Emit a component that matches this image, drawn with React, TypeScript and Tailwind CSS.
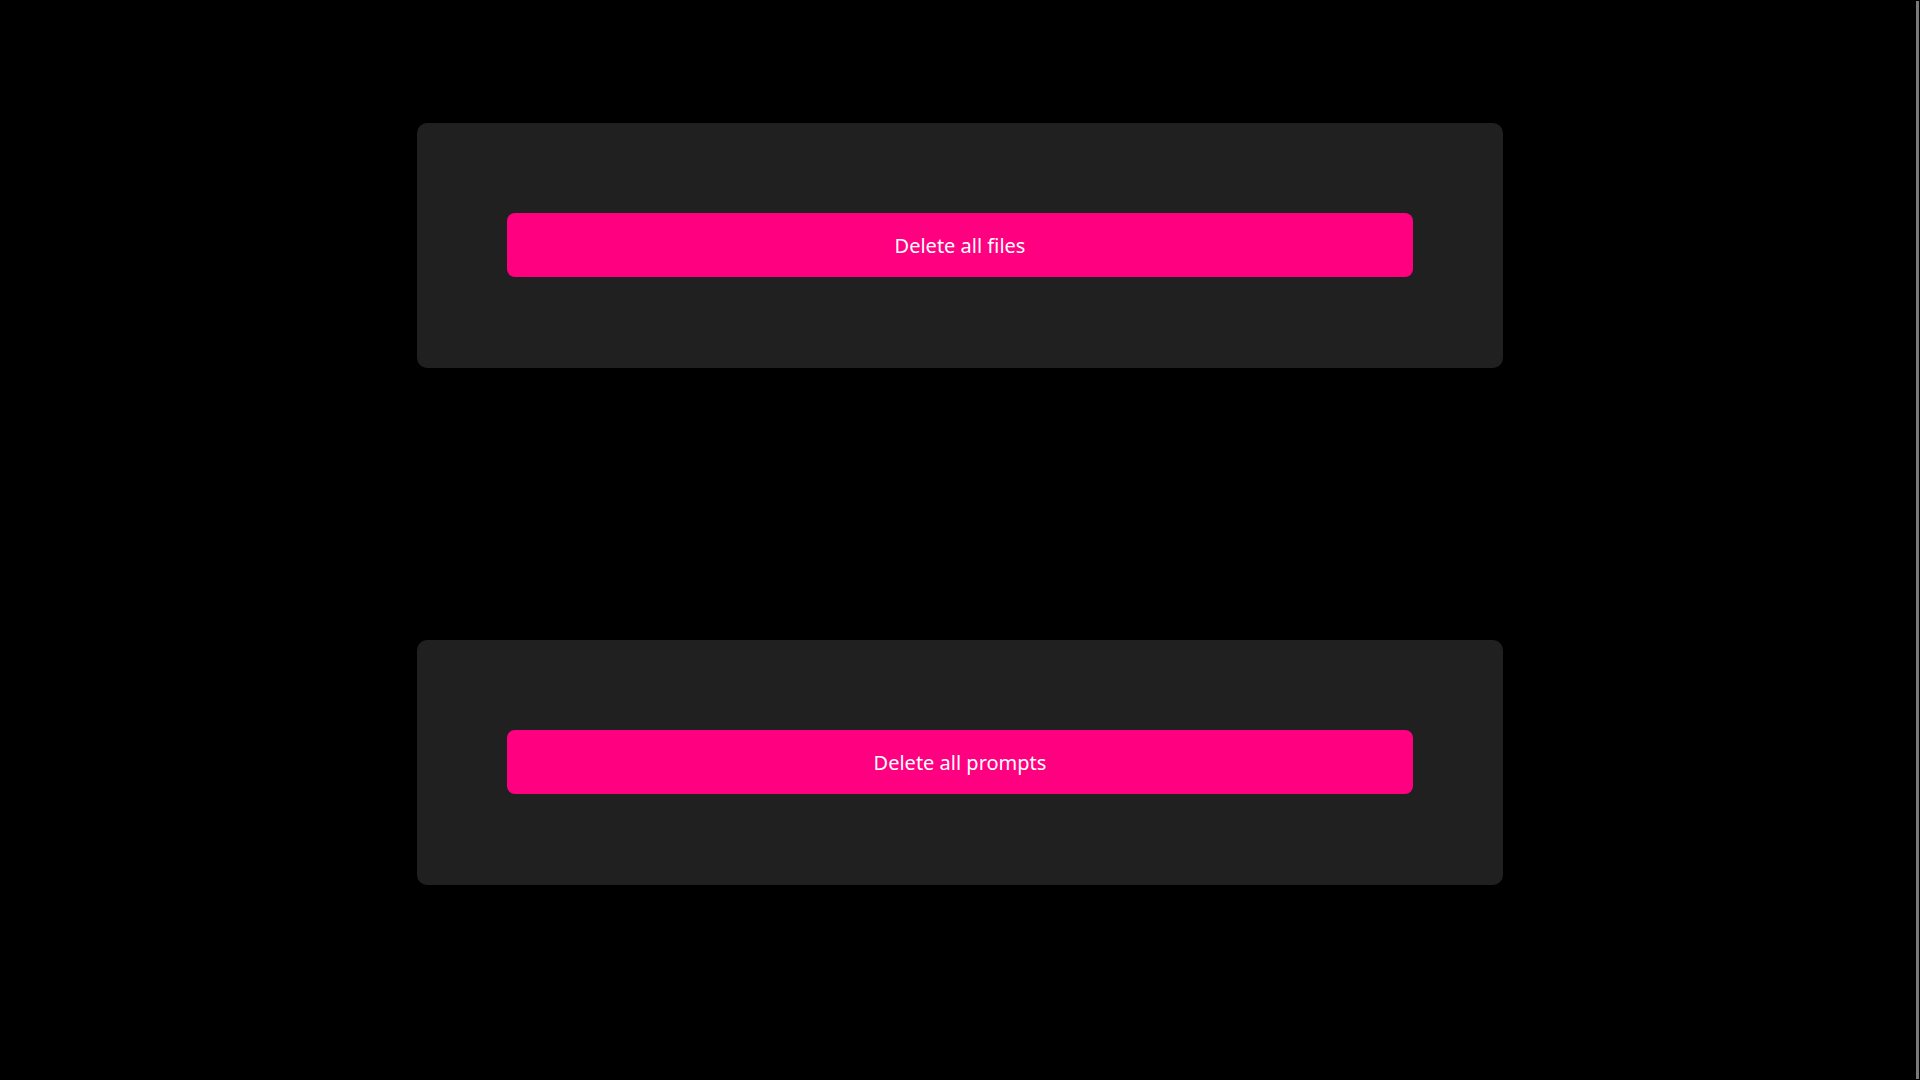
export default function App() {
  const actions = ['Delete all files', 'Delete all prompts'];

  return (
    <div className="min-h-screen bg-black pt-[123px] pb-[200px] font-['Noto_Sans',sans-serif]">
      <div className="flex flex-col items-center gap-[272px]">
        {actions.map((label) => (
          <div key={label} className="w-[1086px] h-[245px] bg-[#202020] rounded-[10px] px-[90px] pt-[90px]">
            <button
              onClick={() => confirm(label + '?')}
              className="w-full h-[64px] bg-[#ff0080] text-white text-[20px] leading-[28px] pt-[2px] rounded-[8px] flex items-center justify-center"
            >
              {label}
            </button>
          </div>
        ))}
      </div>

      {/* overlay scrollbar */}
      <div className="fixed right-[1px] top-[1px] bottom-[1px] w-[3px] bg-[#7a7a7a]" />
    </div>
  );
}
